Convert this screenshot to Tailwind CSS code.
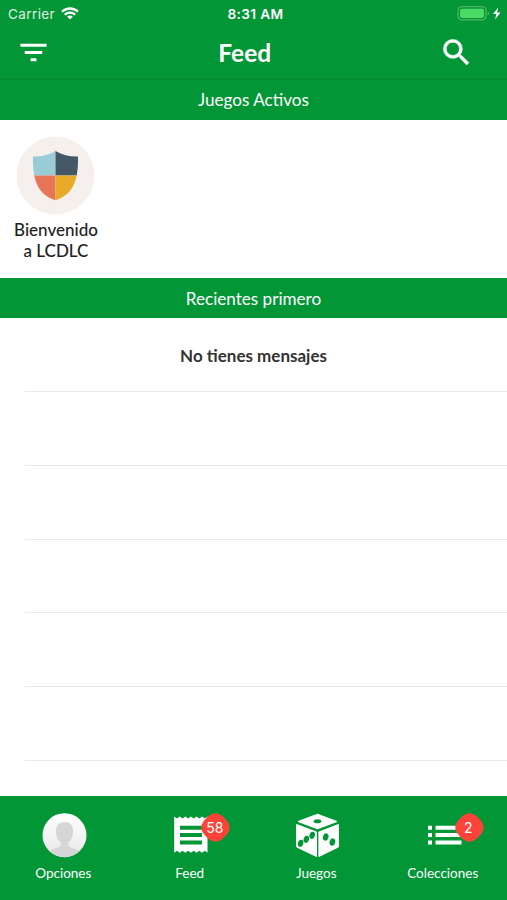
<!DOCTYPE html>
<html lang="es">
    <head>
        <meta charset="UTF-8">
        <meta name="viewport" content="width=device-width, initial-scale=1.0">
        <title>Feed</title>
        <script src="https://cdn.jsdelivr.net/npm/@tailwindcss/browser@4"></script>
    </head>
    <body class="bg-white font-['Lato',sans-serif] text-[#222]">
        <div class="flex flex-col w-[507px] h-[900px] overflow-hidden">

            <header class="bg-[#039637] text-white h-20 shrink-0 border-b border-[#048a33]">
                <!-- status bar -->
                <div class="grid grid-cols-3 items-center h-7 pl-2 pr-[5px] font-['Inter',sans-serif] text-[13.5px]">
                    <div class="flex items-center gap-1.5 text-white/85">
                        <span class="tracking-[0.4px]">Carrier</span>
                        <svg class="w-[18px] h-[13px] mb-px" viewBox="0 0 18 13" fill="none" stroke="white" stroke-width="2.3">
                            <path d="M1 4.8a11.3 11.3 0 0 1 16 0"/>
                            <path d="M3.8 7.8a7.4 7.4 0 0 1 10.4 0"/>
                            <path d="M9 12.6 6.2 9.8a4 4 0 0 1 5.6 0z" fill="white" stroke="none"/>
                        </svg>
                    </div>
                    <div class="text-center font-semibold text-[13.7px] tracking-[0.35px] whitespace-nowrap pl-px pt-px">8:31 AM</div>
                    <div class="flex justify-end">
                        <svg class="w-[45px] h-[15px] mb-px" viewBox="0 0 45 15">
                            <rect x="1" y=".7" width="28" height="13.2" rx="3.5" fill="none" stroke="#66bd78" stroke-width="1"/>
                            <rect x="3" y="2.7" width="24" height="9.2" rx="1.8" fill="#4bdb64"/>
                            <path d="M30.7 5.2c1.6.8 1.6 3.4 0 4.2z" fill="#66bd78"/>
                            <path d="M41.2 1.6 36 8h3.4l-1.4 5.4 5.6-6.9h-3.5z" fill="white"/>
                        </svg>
                    </div>
                </div>
                <!-- nav bar -->
                <div class="flex items-center justify-between h-[51px] pl-[15.5px] pr-[33px]">
                    <svg class="w-[35px] h-[35px] mb-[3px]" viewBox="0 0 24 24" fill="white"><path d="M10 18h4v-2h-4v2zM3 6v2h18V6H3zm3 7h12v-2H6v2z"/></svg>
                    <h1 class="font-bold text-[24.5px] leading-none">Feed</h1>
                    <svg class="w-[35px] h-[35px] mb-[3px]" viewBox="0 0 24 24" fill="white" stroke="white" stroke-width=".4"><path d="M15.5 14h-.79l-.28-.27A6.471 6.471 0 0 0 16 9.5 6.5 6.5 0 1 0 9.5 16c1.61 0 3.09-.59 4.23-1.57l.27.28v.79l5 4.99L20.49 19l-4.99-5zm-6 0C7.01 14 5 11.99 5 9.5S7.01 5 9.5 5 14 7.01 14 9.5 11.99 14 9.5 14z"/></svg>
                </div>
            </header>

            <h2 class="flex items-center justify-center bg-[#039637] text-white h-10 shrink-0 text-[17.1px]">Juegos Activos</h2>

            <section class="h-[158px] shrink-0 pt-4">
                <div class="w-[112px] flex flex-col items-center text-center">
                    <svg class="w-[79px] h-[79px] mr-px" viewBox="0 0 79 79">
                        <circle cx="39.5" cy="39.5" r="39" fill="#f5f0eb"/>
                        <clipPath id="escudo"><path d="M39.5 15C32.5 19.3 25 20.6 17 20.4C16.6 42 20.5 58 39.5 64.3C58.5 58 62.4 42 62 20.4C54 20.6 46.5 19.3 39.5 15Z"/></clipPath>
                        <g clip-path="url(#escudo)">
                            <rect x="15" y="14" width="24.5" height="25.5" fill="#9accd7"/>
                            <rect x="39.5" y="14" width="24" height="25.5" fill="#455866"/>
                            <rect x="15" y="39.5" width="24.5" height="26" fill="#e77558"/>
                            <rect x="39.5" y="39.5" width="24" height="26" fill="#e7ab29"/>
                        </g>
                    </svg>
                    <p class="mt-[5px] text-[17px] leading-[20.5px] font-medium">Bienvenido<br>a LCDLC</p>
                </div>
            </section>

            <h2 class="flex items-center justify-center bg-[#039637] text-white h-10 shrink-0 pt-px text-[17.1px]">Recientes primero</h2>

            <ul class="grow overflow-hidden pl-[25px]">
                <li class="flex items-center justify-center h-[74px] pt-0.5 pr-[25px] border-b border-[#e9e9e9] text-[17px] font-bold text-[#333]">No tienes mensajes</li>
                <li class="h-[73.8px] border-b border-[#e9e9e9]"></li>
                <li class="h-[73.8px] border-b border-[#e9e9e9]"></li>
                <li class="h-[73.8px] border-b border-[#e9e9e9]"></li>
                <li class="h-[73.8px] border-b border-[#e9e9e9]"></li>
                <li class="h-[73.8px] border-b border-[#e9e9e9]"></li>
            </ul>

            <nav class="grid grid-cols-4 bg-[#039637] text-white h-[104px] shrink-0 pt-[17px] pr-px text-[13.5px]">
                <a class="flex flex-col items-center gap-[5px]">
                    <svg class="w-[45px] h-[45px] ml-[3px]" viewBox="0 0 45 45">
                        <defs>
                            <linearGradient id="fondo" x1="0" y1="0" x2="0" y2="1"><stop offset="0" stop-color="#fff"/><stop offset="1" stop-color="#e8e8e8"/></linearGradient>
                            <clipPath id="circulo"><circle cx="22.5" cy="22.2" r="22"/></clipPath>
                        </defs>
                        <g clip-path="url(#circulo)">
                            <rect width="45" height="45" fill="url(#fondo)"/>
                            <path d="M22.5 9c-6 0-9 4-8.6 10c.2 5 2 8 4.6 10.500v3.500c-2 2.500-9 2.600-11.500 5.500V45h31v-6.500c-2.500-2.900-9.500-3-11.500-5.500v-3.500c2.600-2.500 4.400-5.500 4.600-10.500c.4-6-2.600-10-8.600-10z" fill="#d6d6d6"/>
                        </g>
                    </svg>
                    <span>Opciones</span>
                </a>
                <a class="flex flex-col items-center gap-[5px]">
                    <div class="relative w-[45px] h-[45px] ml-0.5">
                        <svg class="w-[45px] h-[45px]" viewBox="0 0 45 45">
                            <path fill="white" fill-rule="evenodd" d="M6.2 3.5L8.9 5.500L11.700 3.500L14.500 5.500L17.300 3.500L20.100 5.500L22.900 3.500L25.700 5.500L28.500 3.500L31.300 5.500L34.100 3.500L36.900 5.500L39.500 3.500V39.800L36.900 37.800L34.100 39.800L31.300 37.800L28.500 39.800L25.700 37.800L22.900 39.800L20.100 37.800L17.300 39.800L14.500 37.800L11.700 39.800L8.900 37.800L6.200 39.800zM12 12.800v4h22v-4zM12 20v4h22v-4zM12 27.400v4h22v-4z"/>
                        </svg>
                        <span class="absolute left-[33px] top-0 w-[29px] h-[29px] flex items-center justify-center pr-0.5 font-['Inter',sans-serif] text-sm">
                            <svg class="absolute inset-0 w-[29px] h-[29px]" viewBox="0 0 29 29"><path fill="#fc4339" d="M14.500 .3C18.200 .3 21.200 2.400 24 5.400C26.300 8 28.700 10.700 28.700 14.500S26.300 21 24 23.500C21.200 26.600 18.200 28.700 14.500 28.700S7.800 26.600 5 23.500C2.700 21 .3 18.300 .3 14.500S2.700 8 5 5.400C7.800 2.400 10.800 .3 14.500 .3Z"/></svg>
                            <span class="relative">58</span>
                        </span>
                    </div>
                    <span>Feed</span>
                </a>
                <a class="flex flex-col items-center gap-[5px]">
                    <svg class="w-[45px] h-[45px] ml-[3px]" viewBox="0 0 45 45">
                        <g fill="white" stroke="white" stroke-width="1" stroke-linejoin="round">
                            <path d="M22.5 1.2 42 8.5 22.5 15.8 3 8.500z"/>
                            <path d="M1.600 11.500 21.500 19V43.500L1.600 34z"/>
                            <path d="M43.400 11.500 23.900 19V43.500L43.400 34z"/>
                        </g>
                        <g fill="#039637">
                            <ellipse cx="22.500" cy="8.300" rx="3.800" ry="2"/>
                            <ellipse cx="17.200" cy="22.300" rx="2.700" ry="3.600" transform="rotate(15 17.200 22.300)"/>
                            <ellipse cx="11.300" cy="26.300" rx="2.700" ry="3.600" transform="rotate(15 11.300 26.300)"/>
                            <ellipse cx="5.600" cy="30.300" rx="2.700" ry="3.600" transform="rotate(15 5.600 30.300)"/>
                            <ellipse cx="30.700" cy="24" rx="2.800" ry="3.700" transform="rotate(15 30.700 24)"/>
                            <ellipse cx="37.400" cy="29" rx="2.800" ry="3.700" transform="rotate(15 37.400 29)"/>
                        </g>
                    </svg>
                    <span>Juegos</span>
                </a>
                <a class="flex flex-col items-center gap-[5px]">
                    <div class="relative w-[45px] h-[45px] ml-[3px]">
                        <svg class="w-[45px] h-[45px]" viewBox="0 0 45 45" fill="white">
                            <path d="M6 12.700h4v4H6zM13.500 12.700H39.500v4H13.500zM6 20h4v4H6zM13.500 20H39.500v4H13.500zM6 27.500h4v4H6zM13.500 27.500H39.500v4H13.500z"/>
                        </svg>
                        <span class="absolute left-[33px] top-0 w-[29px] h-[29px] flex items-center justify-center pr-0.5 font-['Inter',sans-serif] text-sm">
                            <svg class="absolute inset-0 w-[29px] h-[29px]" viewBox="0 0 29 29"><path fill="#fc4339" d="M14.500 .3C18.200 .3 21.200 2.400 24 5.400C26.300 8 28.700 10.700 28.700 14.500S26.300 21 24 23.500C21.200 26.600 18.200 28.700 14.500 28.700S7.800 26.600 5 23.500C2.700 21 .3 18.300 .3 14.500S2.700 8 5 5.400C7.800 2.400 10.800 .3 14.500 .3Z"/></svg>
                            <span class="relative">2</span>
                        </span>
                    </div>
                    <span>Colecciones</span>
                </a>
            </nav>
        </div>
    </body>
</html>
